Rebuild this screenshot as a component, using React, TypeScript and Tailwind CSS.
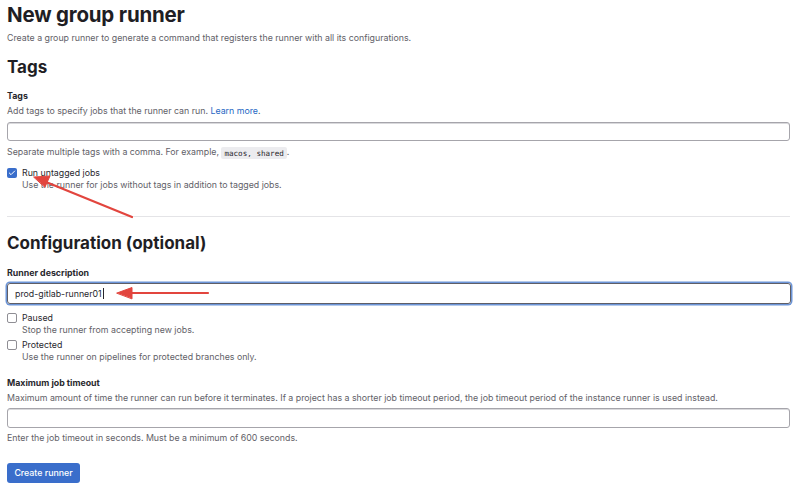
import { Check } from "lucide-react";

const font = { fontFamily: "Inter, 'Noto Sans', sans-serif" };

function Checkbox({ checked }: { checked?: boolean }) {
  return checked ? (
    <span className="mt-[1px] flex h-[10px] w-[10px] shrink-0 items-center justify-center rounded-[2px] bg-[#3a6ecb]">
      <Check className="h-[8px] w-[8px] text-white" strokeWidth={3} />
    </span>
  ) : (
    <span className="mt-[1px] h-[10px] w-[10px] shrink-0 rounded-[2px] border border-[#8f8e94] bg-white" />
  );
}

function Option({
  label,
  hint,
  checked,
  className = "",
}: {
  label: string;
  hint: string;
  checked?: boolean;
  className?: string;
}) {
  return (
    <div className={`flex gap-[5px] ${className}`}>
      <Checkbox checked={checked} />
      <div>
        <div className="text-[#28272d] leading-[12px]">{label}</div>
        <div className="text-[#626168] leading-[12px]">{hint}</div>
      </div>
    </div>
  );
}

export default function App() {
  return (
    <div
      className="relative h-[490px] w-[800px] overflow-hidden bg-white px-[7px] text-[8.8px] text-[#28272d]"
      style={font}
    >
      <h1 className="mt-[3px] text-[20.5px] font-bold leading-[24px] tracking-[-0.2px] text-[#1f1e24]">
        New group runner
      </h1>
      <p className="mt-[5px] leading-[12px] text-[#626168]">
        Create a group runner to generate a command that registers the runner with all its configurations.
      </p>

      <h2 className="mt-[13px] text-[17px] font-bold leading-[20px] text-[#1f1e24]">Tags</h2>

      <div className="mt-[13px] font-bold leading-[12px]">Tags</div>
      <p className="mt-[3px] leading-[12px] text-[#626168]">
        Add tags to specify jobs that the runner can run. <span className="text-[#1f68c4]">Learn more</span>.
      </p>
      <div className="mt-[5px] h-[19px] w-[783px] rounded-[3px] border border-[#a6a5ab] shadow-[inset_0_1px_0_#d9d9dc]" />
      <p className="mt-[5px] leading-[12px] text-[#626168]">
        Separate multiple tags with a comma. For example,{" "}
        <code className="rounded-[2px] bg-[#ececef] px-[3px] py-[1.5px] font-['DejaVu_Sans_Mono',monospace] text-[7.6px] text-[#28272d]">
          macos, shared
        </code>
        .
      </p>

      <Option
        className="mt-[8px]"
        checked
        label="Run untagged jobs"
        hint="Use the runner for jobs without tags in addition to tagged jobs."
      />

      <div className="mt-[25px] h-px w-[783px] bg-[#e4e4e7]" />

      <h2 className="mt-[16px] text-[17px] font-bold leading-[20px] text-[#1f1e24]">Configuration (optional)</h2>

      <div className="mt-[14px] font-bold leading-[12px]">Runner description</div>
      <div className="mt-[4px] flex h-[21px] w-[784px] items-center rounded-[3px] border border-[#5f5e66] px-[7px] shadow-[0_0_0_1.5px_#6c95d8]">
        <span className="leading-[12px] text-[#28272d]">prod-gitlab-runner01</span>
        <span className="ml-[1px] h-[11px] w-px bg-[#28272d]" />
      </div>

      <Option
        className="mt-[8px]"
        label="Paused"
        hint="Stop the runner from accepting new jobs."
      />
      <Option
        className="mt-[3px]"
        label="Protected"
        hint="Use the runner on pipelines for protected branches only."
      />

      <div className="mt-[14px] font-bold leading-[12px]">Maximum job timeout</div>
      <p className="mt-[3px] leading-[12px] text-[#626168]">
        Maximum amount of time the runner can run before it terminates. If a project has a shorter job timeout period, the job timeout period of the instance runner is used instead.
      </p>
      <div className="mt-[4px] h-[20px] w-[783px] rounded-[3px] border border-[#a6a5ab] shadow-[inset_0_1px_0_#d9d9dc]" />
      <p className="mt-[4px] leading-[12px] text-[#626168]">
        Enter the job timeout in seconds. Must be a minimum of 600 seconds.
      </p>

      <button className="mt-[19px] flex h-[20px] w-[73px] items-center justify-center rounded-[3px] bg-[#3a6ecb] text-[8.8px] font-medium text-white">
        Create runner
      </button>

      {/* red callout arrows */}
      <svg className="pointer-events-none absolute left-0 top-0" width="800" height="490">
        <g fill="#e2453e" stroke="#e2453e" strokeLinecap="round">
          <line x1="132" y1="217" x2="46" y2="182" strokeWidth="2.2" />
          <polygon points="34,177 50,176 45,187" strokeWidth="1" strokeLinejoin="round" />
          <line x1="208" y1="293" x2="130" y2="293" strokeWidth="2.2" />
          <polygon points="117,293 132,287.5 132,298.5" strokeWidth="1" strokeLinejoin="round" />
        </g>
      </svg>
    </div>
  );
}
